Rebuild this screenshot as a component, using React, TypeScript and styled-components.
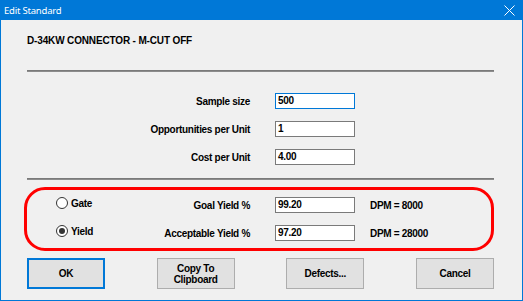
import React from 'react';
import styled, { createGlobalStyle } from 'styled-components';

const Global = createGlobalStyle`
  html, body { margin: 0; padding: 0; background: #ffffff; }
  body { font-family: "Liberation Sans", Arial, sans-serif; }
`;

const Window = styled.div`
  width: 523px;
  height: 301px;
  box-sizing: border-box;
  border: 1px solid #0078d7;
  border-top: none;
  background: #f0f0f0;
  display: flex;
  flex-direction: column;
`;

const TitleBar = styled.div`
  height: 20px;
  background: #0078d7;
  display: flex;
  align-items: center;
  padding: 0 7px 0 3px;
  color: #ffffff;
  font-family: "Noto Sans", "Open Sans", sans-serif;
  font-size: 9.5px;
  letter-spacing: -0.2px;
`;

const TitleText = styled.span`
  flex: 1;
`;

const Body = styled.div`
  flex: 1;
  display: flex;
  flex-direction: column;
  padding: 0 28px 0 26px;
  font-size: 10px;
  font-weight: bold;
  letter-spacing: -0.3px;
  color: #000000;
`;

const Heading = styled.div`
  margin-top: 14px;
  line-height: 13px;
  letter-spacing: -0.15px;
`;

const Separator = styled.div<{ $top: number }>`
  margin-top: ${p => p.$top}px;
  height: 2px;
  background: linear-gradient(#7a7a7a 0 1px, #8c8c8c 1px 2px);
`;

const FieldList = styled.div`
  padding-top: 21px;
  display: flex;
  flex-direction: column;
  gap: 12px;
`;

const Row = styled.div`
  height: 16px;
  display: flex;
  align-items: center;
`;

const FieldLabel = styled.div<{ $width: number }>`
  width: ${p => p.$width}px;
  text-align: right;
  margin-right: 25px;
  white-space: nowrap;
`;

const Input = styled.div<{ $focused?: boolean }>`
  width: 80px;
  height: 16px;
  box-sizing: border-box;
  border: 1px solid ${p => (p.$focused ? '#0078d7' : '#7a7a7a')};
  background: #ffffff;
  padding: 0 2px;
  line-height: 14px;
`;

const GroupBox = styled.div`
  margin: 7px 0 0 -3px;
  border: 3px solid #ff0000;
  border-radius: 21px;
  padding: 7px 0;
  display: flex;
  flex-direction: column;
  gap: 12px;
`;

const RadioOption = styled.div`
  width: 100px;
  box-sizing: border-box;
  padding-left: 29px;
  display: flex;
  align-items: center;
  gap: 3px;
  align-self: center;
  margin-bottom: 4px;
`;

const RadioCircle = styled.span<{ $checked?: boolean }>`
  width: 12px;
  height: 12px;
  box-sizing: border-box;
  border-radius: 50%;
  border: 1px solid #333333;
  background: #ffffff;
  display: flex;
  align-items: center;
  justify-content: center;
  &::after {
    content: '';
    width: 6px;
    height: 6px;
    border-radius: 50%;
    background: ${p => (p.$checked ? '#333333' : 'transparent')};
  }
`;

const Dpm = styled.div`
  margin-left: 15px;
  white-space: nowrap;
`;

const ButtonBar = styled.div`
  margin-top: 7px;
  display: flex;
  justify-content: space-between;
`;

const Button = styled.div<{ $default?: boolean }>`
  width: 78px;
  height: 31px;
  box-sizing: border-box;
  border: ${p => (p.$default ? '2px solid #0078d7' : '1px solid #adadad')};
  background: #e1e1e1;
  display: flex;
  align-items: center;
  justify-content: center;
  text-align: center;
  line-height: 11px;
`;

const fields = [
  { label: 'Sample size', value: '500', focused: true },
  { label: 'Opportunities per Unit', value: '1' },
  { label: 'Cost per Unit', value: '4.00' },
];

const yields = [
  { radio: 'Gate', checked: false, label: 'Goal Yield %', value: '99.20', dpm: 'DPM = 8000' },
  { radio: 'Yield', checked: true, label: 'Acceptable Yield %', value: '97.20', dpm: 'DPM = 28000' },
];

export default function App() {
  return (
    <>
      <Global />
      <Window>
        <TitleBar>
          <TitleText>Edit Standard</TitleText>
          <svg width="11" height="11" viewBox="0 0 11 11">
            <path d="M0.5 0.5 L10.5 10.5 M10.5 0.5 L0.5 10.5" stroke="#ffffff" strokeWidth="1" />
          </svg>
        </TitleBar>
        <Body>
          <Heading>D-34KW CONNECTOR - M-CUT OFF</Heading>
          <Separator $top={23} />
          <FieldList>
            {fields.map(f => (
              <Row key={f.label}>
                <FieldLabel $width={223}>{f.label}</FieldLabel>
                <Input $focused={f.focused}>{f.value}</Input>
              </Row>
            ))}
          </FieldList>
          <Separator $top={13} />
          <GroupBox>
            {yields.map(y => (
              <Row key={y.radio}>
                <RadioOption>
                  <RadioCircle $checked={y.checked} />
                  {y.radio}
                </RadioOption>
                <FieldLabel $width={123}>{y.label}</FieldLabel>
                <Input>{y.value}</Input>
                <Dpm>{y.dpm}</Dpm>
              </Row>
            ))}
          </GroupBox>
          <ButtonBar>
            <Button $default>OK</Button>
            <Button>Copy To<br />Clipboard</Button>
            <Button>Defects...</Button>
            <Button>Cancel</Button>
          </ButtonBar>
        </Body>
      </Window>
    </>
  );
}
